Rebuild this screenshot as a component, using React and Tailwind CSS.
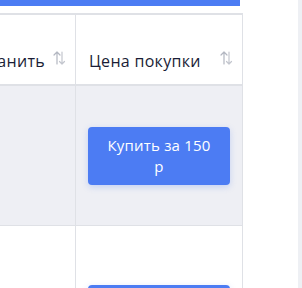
export default function App() {
  const SortIcon = () => (
    <svg width="13" height="14" viewBox="0 0 13 14" fill="none" className="shrink-0">
      <path d="M4 13V1M1 4l3-3 3 3" stroke="#b3b7c1" strokeWidth="1.2" strokeLinecap="round" strokeLinejoin="round" />
      <path d="M9 1v12M6.5 10.5L9 13l2.5-2.5" stroke="#c3c6ce" strokeWidth="1.2" strokeLinecap="round" strokeLinejoin="round" />
    </svg>
  );

  const BuyButton = () => (
    <button className="w-[142px] h-[58px] rounded-[4px] bg-[#4c7cf3] text-white text-[15px] leading-[21px] tracking-[0.2px] px-4 shadow-[0_2px_6px_rgba(76,124,243,0.25)]">
      Купить за 150 р
    </button>
  );

  return (
    <div className="w-[302px] h-[288px] overflow-hidden bg-white flex font-['Open_Sans',sans-serif] text-[#1a1d36]">
      <div className="w-[298px] flex flex-col">
        <div className="h-[6px] w-[240px] bg-[#4c7cf3] shrink-0" />
        <div className="mt-[7px] w-[243px] border-t-2 border-r border-[#dfe1e6] shrink-0">
          <div className="grid grid-cols-[76px_166px] h-[71px] border-b-2 border-[#dfe1e6]">
            <div className="border-r border-[#dfe1e6] flex items-start justify-end pt-[36px] pr-[9px] gap-[8px] overflow-hidden">
              <span className="text-[16px] leading-[20px] tracking-[0.3px] whitespace-nowrap">Сохранить</span>
              <SortIcon />
            </div>
            <div className="flex items-start justify-between pt-[36px] pl-[13px] pr-[9px]">
              <span className="text-[16px] leading-[20px] tracking-[0.3px] whitespace-nowrap">Цена покупки</span>
              <SortIcon />
            </div>
          </div>
          <div className="grid grid-cols-[76px_166px] h-[140px] bg-[#eeeff4] border-b border-[#dfe1e6]">
            <div className="border-r border-[#dfe1e6]" />
            <div className="flex items-center px-3">
              <BuyButton />
            </div>
          </div>
          <div className="grid grid-cols-[76px_166px] h-[120px] bg-white">
            <div className="border-r border-[#dfe1e6]" />
            <div className="px-3 pt-[59px]">
              <BuyButton />
            </div>
          </div>
        </div>
      </div>
      <div className="w-[4px] bg-[#eef0f4]" />
    </div>
  );
}
